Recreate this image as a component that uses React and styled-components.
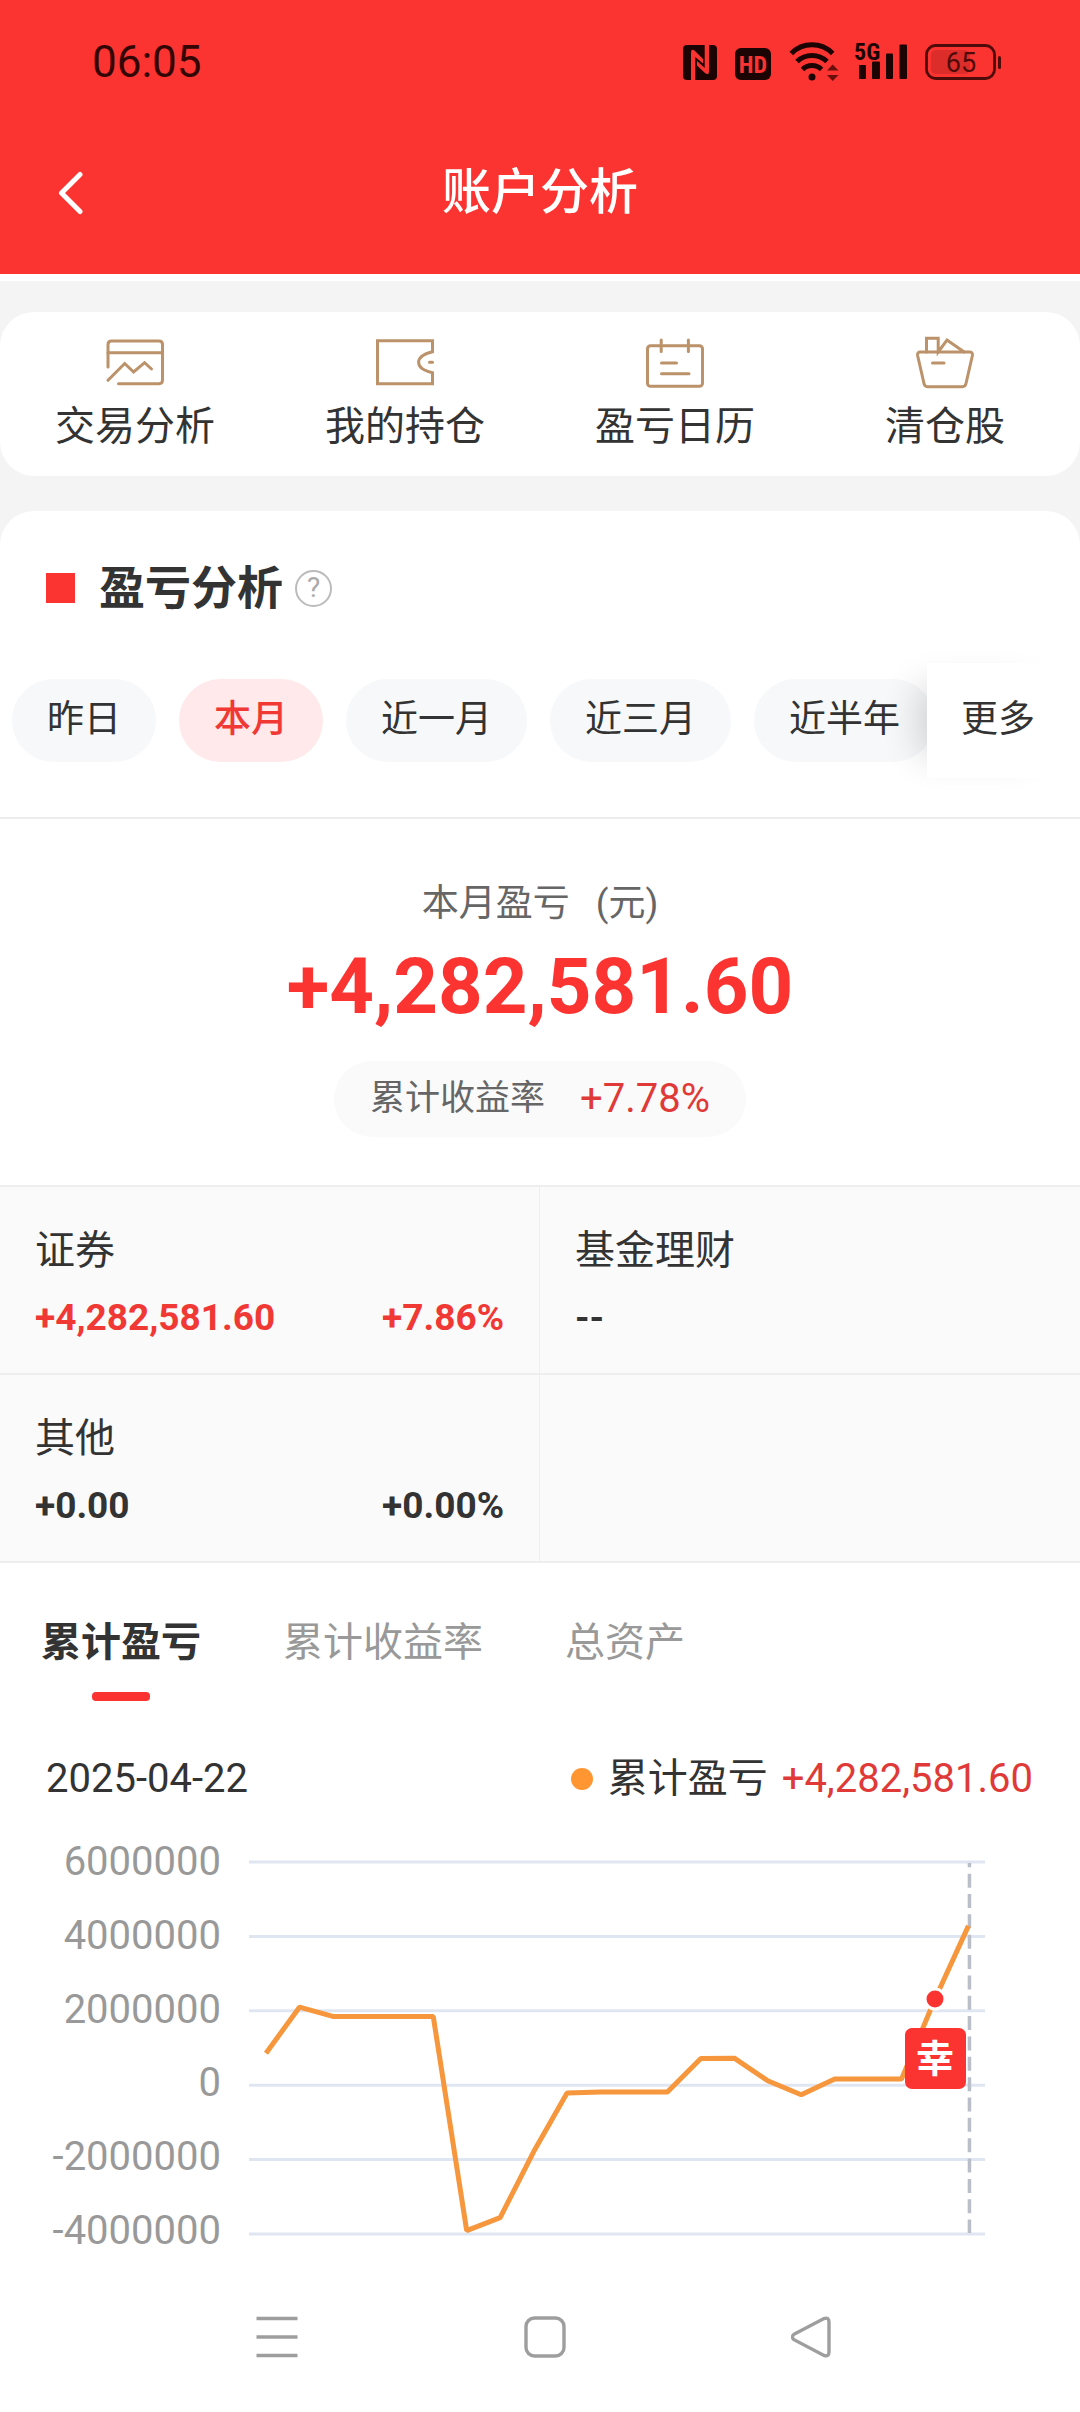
import React, { useState } from "react";
import styled, { createGlobalStyle } from "styled-components";

const GlobalStyle = createGlobalStyle`
  * {
    box-sizing: border-box;
  }
  body {
    margin: 0;
    background: #f4f4f4;
    color: #333333;
    font-family: Roboto, "Noto Sans CJK SC", sans-serif;
  }
  button {
    margin: 0;
    padding: 0;
    border: none;
    background: none;
    color: inherit;
    font: inherit;
    cursor: pointer;
  }
  h1, h2, p, dl, dt, dd {
    margin: 0;
    font-weight: 400;
  }
`;

const links = [
  { label: "交易分析", icon: <TradeIcon /> },
  { label: "我的持仓", icon: <WalletIcon /> },
  { label: "盈亏日历", icon: <CalendarIcon /> },
  { label: "清仓股", icon: <BasketIcon /> },
];

const ranges = ["昨日", "本月", "近一月", "近三月", "近半年"];

const assets = [
  { name: "证券", amount: "+4,282,581.60", rate: "+7.86%", up: true },
  { name: "基金理财", amount: "--" },
  { name: "其他", amount: "+0.00", rate: "+0.00%" },
  {},
];

const tabs = ["累计盈亏", "累计收益率", "总资产"];

const ticks = [6000000, 4000000, 2000000, 0, -2000000, -4000000];

const series = [
  860000, 2097000, 1850000, 1850000, 1850000, 1850000, -3910000, -3560000,
  -1790000, -210000, -185000, -185000, -185000, 720000, 726000, 120000,
  -255000, 167000, 167000, 167000, 2317000, 4282581,
];

export default function App() {
  return (
    <PageStyled>
      <GlobalStyle />
      <Header />
      <QuickLinks />
      <PanelStyled>
        <PanelTitle />
        <RangePicker />
        <Summary />
        <AssetGrid />
        <Trend />
      </PanelStyled>
      <SystemNav />
    </PageStyled>
  );
}

function Header() {
  return (
    <HeaderStyled>
      <div className="status">
        <time>06:05</time>
        <div className="icons">
          <NfcIcon />
          <HdIcon />
          <WifiIcon />
          <SignalIcon />
          <BatteryIcon />
        </div>
      </div>
      <div className="bar">
        <button type="button" aria-label="返回">
          <svg width="26" height="46" viewBox="0 0 26 46" fill="none">
            <path
              d="M22 4.500L3.500 23L22 41.500"
              stroke="#ffffff"
              strokeWidth="5"
              strokeLinecap="round"
              strokeLinejoin="round"
            />
          </svg>
        </button>
        <h1>账户分析</h1>
      </div>
    </HeaderStyled>
  );
}

function QuickLinks() {
  return (
    <QuickLinksStyled>
      {links.map((link) => (
        <button type="button" key={link.label}>
          {link.icon}
          <span>{link.label}</span>
        </button>
      ))}
    </QuickLinksStyled>
  );
}

function PanelTitle() {
  return (
    <PanelTitleStyled>
      <i />
      <h2>盈亏分析</h2>
      <button type="button" aria-label="说明">
        ?
      </button>
    </PanelTitleStyled>
  );
}

function RangePicker() {
  const [active, setActive] = useState("本月");
  return (
    <RangePickerStyled>
      <div className="list">
        {ranges.map((range) => (
          <ChipStyled
            type="button"
            key={range}
            $active={range === active}
            onClick={() => setActive(range)}
          >
            {range}
          </ChipStyled>
        ))}
      </div>
      <MoreStyled type="button">更多</MoreStyled>
    </RangePickerStyled>
  );
}

function Summary() {
  return (
    <SummaryStyled>
      <p className="caption">
        <span>本月盈亏</span>
        <span>(元)</span>
      </p>
      <p className="total">+4,282,581.60</p>
      <p className="rate">
        <span>累计收益率</span>
        <strong>+7.78%</strong>
      </p>
    </SummaryStyled>
  );
}

function AssetGrid() {
  return (
    <AssetGridStyled>
      {assets.map((asset, index) => (
        <AssetStyled key={index} $up={asset.up}>
          {asset.name && (
            <>
              <dt>{asset.name}</dt>
              <dd>
                <span>{asset.amount}</span>
                <span>{asset.rate}</span>
              </dd>
            </>
          )}
        </AssetStyled>
      ))}
    </AssetGridStyled>
  );
}

function Trend() {
  const [tab, setTab] = useState(tabs[0]);
  return (
    <section>
      <TabsStyled role="tablist">
        {tabs.map((name) => (
          <TabStyled
            type="button"
            role="tab"
            key={name}
            aria-selected={name === tab}
            $active={name === tab}
            onClick={() => setTab(name)}
          >
            {name}
          </TabStyled>
        ))}
      </TabsStyled>
      <LegendStyled>
        <time>2025-04-22</time>
        <div className="serie">
          <i />
          <span>累计盈亏</span>
          <strong>+4,282,581.60</strong>
        </div>
      </LegendStyled>
      <Chart />
    </section>
  );
}

function Chart() {
  const step = 74.4;
  const x = (index) => 18 + index * 33.45;
  const y = (value) => 23 + ((6000000 - value) / 2000000) * step;
  const points = series.map((value, i) => `${x(i)},${y(value)}`).join(" ");
  const buy = series.length - 2;
  const last = x(series.length - 1) + 1;

  return (
    <ChartStyled>
      <div className="axis">
        {ticks.map((tick) => (
          <span key={tick}>{tick}</span>
        ))}
      </div>
      <svg viewBox="0 0 832 418" preserveAspectRatio="xMinYMin meet">
        {ticks.map((tick) => (
          <line
            key={tick}
            x1="1"
            x2="737"
            y1={y(tick)}
            y2={y(tick)}
            stroke="#e0e6f1"
            strokeWidth="3"
          />
        ))}
        <line
          x1={last}
          x2={last}
          y1="24"
          y2="394"
          stroke="#b9bec9"
          strokeWidth="3.500"
          strokeDasharray="14 6.350"
          strokeDashoffset="9.700"
        />
        <polyline
          points={points}
          fill="none"
          stroke="#f6963d"
          strokeWidth="5"
          strokeLinejoin="bevel"
        />
        <circle
          cx={x(buy)}
          cy={y(series[buy])}
          r="10"
          fill="#fc3431"
          stroke="#ffffff"
          strokeWidth="3"
        />
        <rect
          x={x(buy) - 30}
          y={y(series[buy]) + 29}
          width="61"
          height="61"
          rx="7"
          fill="#fc3431"
        />
        <text
          x={x(buy)}
          y={y(series[buy]) + 73}
          fill="#ffffff"
          fontSize="38"
          fontWeight="700"
          textAnchor="middle"
        >
          幸
        </text>
      </svg>
    </ChartStyled>
  );
}

function SystemNav() {
  return (
    <SystemNavStyled>
      <button type="button" aria-label="菜单">
        <svg width="42" height="42" viewBox="0 0 42 42">
          <path d="M.5 2.500h41M.5 21h41M.5 39.500h41" />
        </svg>
      </button>
      <button type="button" aria-label="主页">
        <svg width="42" height="42" viewBox="0 0 42 42">
          <rect x="2" y="2" width="38" height="38" rx="8.500" />
        </svg>
      </button>
      <button type="button" aria-label="后退">
        <svg width="42" height="42" viewBox="0 0 42 42">
          <path d="M3 18.300L33 2.600Q38 .8 38 6V36Q38 41.200 33 39.400L3 23.700Q-.2 21 3 18.300Z" />
        </svg>
      </button>
    </SystemNavStyled>
  );
}

/* quick link icons */

function TradeIcon() {
  return (
    <svg viewBox="0 0 60 56">
      <path d="M3 32V9.500Q3 6 6.500 6H54Q57.500 6 57.500 9.500V45Q57.500 48.700 54 48.700H13.500" />
      <path d="M3 17.700H57.500M3 45.300L19.700 28.500L28.600 37L39.600 27.700L46.500 34" />
    </svg>
  );
}

function WalletIcon() {
  return (
    <svg viewBox="0 0 60 56">
      <path d="M57.500 5.700H2.500V48.700H57.500V37.700C50 36 43.600 33.500 43.600 27.300S50 18.500 57.500 16.700Z" />
      <path d="M54.500 27.300H57.500" />
    </svg>
  );
}

function CalendarIcon() {
  return (
    <svg viewBox="0 0 60 56">
      <rect x="2.500" y="10.700" width="55" height="40.500" rx="3" />
      <path d="M16.200 5V16.500M43.400 5V16.500M16.500 28H31.500M16.500 38.700H44" />
    </svg>
  );
}

function BasketIcon() {
  return (
    <svg viewBox="0 0 60 56">
      <path d="M5.500 17H54.500Q58 17 57.400 20.500L51 48.500Q50.300 51.700 47.500 51.700H12.500Q9.700 51.700 9 48.500L2.600 20.500Q2 17 5.500 17Z" />
      <path d="M11.500 17V3.200H23.200V17L32 5L49.200 17M17.500 28H29" />
    </svg>
  );
}

/* status bar icons */

function NfcIcon() {
  return (
    <svg width="34" height="40" viewBox="0 0 34 40">
      <rect y="3" width="34" height="35" rx="4" fill="#1d0404" />
      <path
        d="M8 38V11Q8 5.500 12 9L20 17V21.500L12.300 15V38ZM26 3V29Q26 34 22 31L14 23.500V19L21.700 26V3Z"
        fill="#fc3431"
      />
    </svg>
  );
}

function HdIcon() {
  return (
    <svg width="36" height="40" viewBox="0 0 36 40">
      <rect y="6" width="36" height="32" rx="6" fill="#1d0404" />
      <text x="18" y="31" fontSize="24" textAnchor="middle" fill="#fc3431">
        HD
      </text>
    </svg>
  );
}

function WifiIcon() {
  return (
    <svg width="48" height="40" viewBox="0 0 48 40">
      <g fill="none" stroke="#1d0404" strokeWidth="5">
        <path d="M2.300 11.500A29 29 0 0 1 43.700 11.500" />
        <path d="M8 19.500A21.700 21.700 0 0 1 38 19.500" />
        <path d="M13.500 27.500A13.500 13.500 0 0 1 32.500 27.500" />
      </g>
      <circle cx="23" cy="35" r="3.500" fill="#1d0404" />
      <path
        d="M38 28.500H49.500L43.700 22.500ZM38 33H49.500L43.700 39Z"
        fill="#6b0f0d"
      />
    </svg>
  );
}

function SignalIcon() {
  return (
    <svg width="52" height="48" viewBox="0 -4 52 48">
      <g fill="#1d0404">
        <text x="-1" y="18" fontSize="24">
          5G
        </text>
        <rect x="4" y="23" width="7" height="14" rx="1" />
        <rect x="17" y="19.500" width="8" height="17.500" rx="1" />
        <rect x="31" y="11.500" width="7" height="25.500" rx="1" />
        <rect x="44.500" y="2.500" width="7.500" height="34.500" rx="1" />
      </g>
    </svg>
  );
}

function BatteryIcon() {
  return (
    <svg width="76" height="40" viewBox="0 0 76 40">
      <rect x="6" y="8" width="39" height="24" rx="5" fill="#dc2d2b" />
      <rect
        x="1.500"
        y="3.500"
        width="68"
        height="33"
        rx="9"
        fill="none"
        stroke="#4f0b0a"
        strokeWidth="2.800"
      />
      <rect x="73" y="14" width="3" height="13" rx="1.500" fill="#4f0b0a" />
      <text className="level" x="36" y="30" fontSize="27" textAnchor="middle">
        65
      </text>
    </svg>
  );
}

const PageStyled = styled.div`
  display: flex;
  flex-direction: column;
`;

const HeaderStyled = styled.header`
  background: #fc3431;
  border-bottom: 7px solid #ffffff;

  .status {
    display: flex;
    justify-content: space-between;
    align-items: center;
    height: 110px;
    padding: 14px 79px 0 92px;
    time {
      font-size: 44px;
      color: #330605;
    }
  }

  .icons {
    display: flex;
    align-items: center;
    gap: 18px;
    svg {
      overflow: visible;
    }
    text {
      font-family: "Liberation Sans Narrow", "Roboto Condensed", Roboto, sans-serif;
      font-weight: 700;
    }
    .level {
      font-family: Roboto, sans-serif;
      font-weight: 400;
      fill: #4f0b0a;
    }
  }

  .bar {
    display: grid;
    grid-template-columns: 1fr auto 1fr;
    align-items: center;
    height: 164px;
    padding: 2px 58px 0;
    button {
      display: flex;
      justify-self: start;
    }
    h1 {
      font-size: 49px;
      font-weight: 500;
      line-height: 60px;
      color: #ffffff;
    }
  }
`;

const QuickLinksStyled = styled.nav`
  display: grid;
  grid-template-columns: repeat(4, 1fr);
  margin: 31px 0 35px;
  padding: 23px 0 25px;
  border-radius: 34px;
  background: #ffffff;

  button {
    display: flex;
    flex-direction: column;
    align-items: center;
    gap: 12px;
    font-size: 40px;
    line-height: 48px;
  }

  svg {
    width: 60px;
    height: 56px;
    fill: none;
    stroke: #bb9269;
    stroke-width: 3;
    stroke-linecap: round;
  }
`;

const PanelStyled = styled.main`
  padding-top: 46px;
  border-radius: 34px 34px 0 0;
  background: #ffffff;
`;

const PanelTitleStyled = styled.div`
  display: flex;
  align-items: center;
  padding: 0 46px;

  i {
    width: 29px;
    height: 30px;
    margin-right: 24px;
    background: #fc3431;
  }
  h2 {
    font-size: 46px;
    font-weight: 700;
    line-height: 62px;
  }
  button {
    width: 37px;
    height: 37px;
    margin-left: 12px;
    border: 2px solid #bbbbbb;
    border-radius: 50%;
    font-size: 28px;
    line-height: 32px;
    color: #aaaaaa;
  }
`;

const RangePickerStyled = styled.div`
  display: flex;
  align-items: center;
  margin-top: 44px;
  padding-bottom: 39px;
  border-bottom: 2px solid #ececec;

  .list {
    display: flex;
    flex: 1;
    gap: 23px;
    min-width: 0;
    padding-left: 12px;
    overflow: hidden;
  }
`;

const ChipStyled = styled.button`
  flex: none;
  && {
    padding: 0 35px 1px;
    border-radius: 42px;
    background: ${({ $active }) => ($active ? "#ffe9ea" : "#f7f8fa")};
    color: ${({ $active }) => ($active ? "#f03835" : "#333333")};
    font-size: 37px;
    font-weight: ${({ $active }) => ($active ? 500 : 400)};
    line-height: 82px;
  }
`;

const MoreStyled = styled.button`
  position: relative;
  flex: none;
  && {
    padding: 0 45px 1px 34px;
    background: #ffffff;
    box-shadow: -30px 0 36px -22px rgba(0, 0, 0, 0.16);
    font-size: 37px;
    line-height: 114px;
  }
`;

const SummaryStyled = styled.section`
  display: flex;
  flex-direction: column;
  align-items: center;
  padding: 62px 0 48px;

  .caption {
    display: flex;
    gap: 26px;
    font-size: 37px;
    line-height: 46px;
    color: #666666;
  }
  .total {
    margin: 14px 0 28px;
    font-size: 78px;
    font-weight: 700;
    line-height: 92px;
    color: #fc3431;
  }
  .rate {
    display: flex;
    align-items: center;
    gap: 35px;
    padding: 0 36px;
    border-radius: 38px;
    background: #fafafa;
    font-size: 35px;
    line-height: 76px;
    color: #666666;
    strong {
      font-size: 40px;
      font-weight: 400;
      color: #e03a38;
    }
  }
`;

const AssetGridStyled = styled.dl`
  display: grid;
  grid-template-columns: 1fr 1fr;
  border-top: 2px solid #eeeeee;
`;

const AssetStyled = styled.div`
  padding: 40px 35px 33px;
  border-bottom: 2px solid #eeeeee;
  background: #fafafa;

  &:nth-child(odd) {
    border-right: 1px solid #eeeeee;
  }
  dt {
    font-size: 40px;
    line-height: 48px;
  }
  dd {
    display: flex;
    justify-content: space-between;
    margin-top: 21px;
    font-size: 37px;
    font-weight: 700;
    line-height: 44px;
    color: ${({ $up }) => ($up ? "#f03835" : "#333333")};
  }
`;

const TabsStyled = styled.div`
  display: flex;
  gap: 82px;
  padding: 56px 41px 0;
`;

const TabStyled = styled.button`
  && {
    display: flex;
    flex-direction: column;
    align-items: center;
    gap: 25px;
    font-size: 40px;
    font-weight: ${({ $active }) => ($active ? 700 : 400)};
    line-height: 48px;
    color: ${({ $active }) => ($active ? "#333333" : "#999999")};
  }
  &::after {
    content: "";
    width: 58px;
    height: 9px;
    border-radius: 4px;
    background: ${({ $active }) => ($active ? "#fc3431" : "transparent")};
  }
`;

const LegendStyled = styled.div`
  display: flex;
  justify-content: space-between;
  align-items: center;
  margin: 54px 0 36px;
  padding: 0 47px 0 46px;
  font-size: 40px;
  line-height: 48px;

  .serie {
    display: flex;
    align-items: center;
  }
  i {
    width: 22px;
    height: 22px;
    margin-right: 15px;
    border-radius: 50%;
    background: #ff9632;
  }
  strong {
    margin-left: 14px;
    font-weight: 400;
    color: #e03a38;
  }
`;

const ChartStyled = styled.div`
  display: flex;

  .axis {
    display: flex;
    flex-direction: column;
    justify-content: space-between;
    width: 248px;
    padding: 0 27px 3px 0;
    font-size: 40px;
    line-height: 46px;
    text-align: right;
    color: #999999;
  }
  svg {
    display: block;
    flex: 1;
    min-width: 0;
  }
`;

const SystemNavStyled = styled.nav`
  display: flex;
  justify-content: space-between;
  padding: 59px 247px 54px 256px;
  background: #ffffff;

  button {
    display: flex;
  }
  svg {
    fill: none;
    stroke: #9e9e9e;
    stroke-width: 3.4;
  }
`;
